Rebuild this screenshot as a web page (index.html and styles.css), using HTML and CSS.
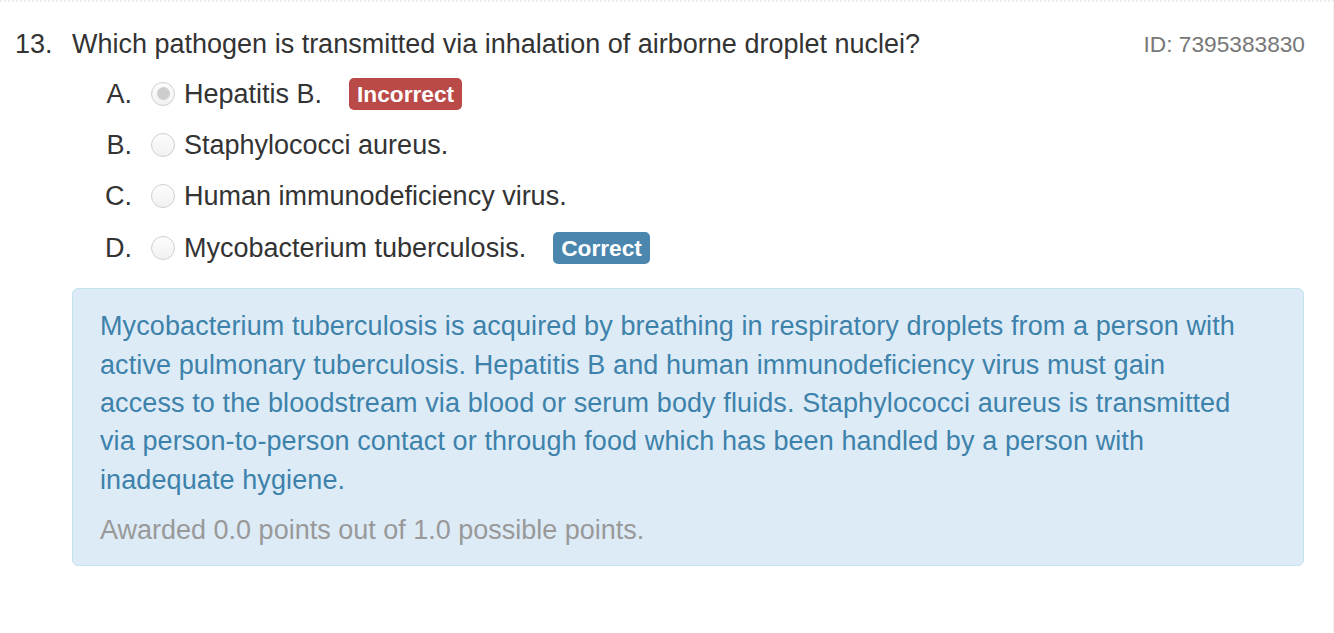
FILE: index.html
```html
<!DOCTYPE html>
<html>
<head>
<meta charset="utf-8">
<link rel="stylesheet" href="styles.css">
</head>
<body>
<div class="page">
  <div class="question">
    <span class="qnum">13.</span>
    <span class="qtext">Which pathogen is transmitted via inhalation of airborne droplet nuclei?</span>
    <span class="qid">ID: 7395383830</span>
  </div>
  <div class="options">
    <div class="option">
      <span class="letter">A.</span>
      <span class="radio checked"></span>
      <span class="otext">Hepatitis B.</span>
      <span class="badge badge-incorrect">Incorrect</span>
    </div>
    <div class="option">
      <span class="letter">B.</span>
      <span class="radio"></span>
      <span class="otext">Staphylococci aureus.</span>
    </div>
    <div class="option">
      <span class="letter">C.</span>
      <span class="radio"></span>
      <span class="otext">Human immunodeficiency virus.</span>
    </div>
    <div class="option">
      <span class="letter">D.</span>
      <span class="radio"></span>
      <span class="otext">Mycobacterium tuberculosis.</span>
      <span class="badge badge-correct">Correct</span>
    </div>
  </div>
  <div class="explain">
    <p class="explain-text">Mycobacterium tuberculosis is acquired by breathing in respiratory droplets from a person with active pulmonary tuberculosis. Hepatitis B and human immunodeficiency virus must gain access to the bloodstream via blood or serum body fluids. Staphylococci aureus is transmitted via person-to-person contact or through food which has been handled by a person with inadequate hygiene.</p>
    <p class="points">Awarded 0.0 points out of 1.0 possible points.</p>
  </div>
</div>
</body>
</html>
```

FILE: styles.css
```css
html, body {
  margin: 0;
  padding: 0;
  background: #fff;
}
body {
  font-family: "Liberation Sans", Arial, sans-serif;
  font-size: 27px;
  line-height: 38px;
  color: #333;
}
.page {
  height: 632px;
  box-sizing: border-box;
  border-top: 2px dotted #ececec;
  border-right: 1px solid #f0f0f0;
  padding-top: 23px;
}
.question {
  display: flex;
  align-items: center;
  padding-left: 15px;
  padding-right: 28px;
}
.qnum {
  width: 57px;
  flex: none;
}
.qtext {
  flex: 1;
}
.qid {
  color: #777;
  font-size: 22.7px;
}
.options {
  margin-top: 5px;
  padding-left: 72px;
}
.option {
  display: flex;
  align-items: center;
  height: 51.33px;
}
.letter {
  width: 60px;
  text-align: right;
  flex: none;
}
.radio {
  width: 22px;
  height: 22px;
  border: 1px solid #cfcfcf;
  border-radius: 50%;
  background: linear-gradient(#fdfdfd, #f1f1f1);
  margin-left: 19px;
  margin-right: 9px;
  box-sizing: content-box;
  display: flex;
  align-items: center;
  justify-content: center;
  flex: none;
}
.radio.checked::after {
  content: "";
  width: 13px;
  height: 13px;
  border-radius: 50%;
  background: #cdcdcd;
}
.badge {
  margin-left: 27px;
  color: #fff;
  font-weight: bold;
  font-size: 22.7px;
  line-height: 32px;
  height: 32px;
  padding: 0 8px;
  border-radius: 5px;
}
.badge-incorrect {
  background: #b94a48;
}
.badge-correct {
  background: #4a86ad;
}
.explain {
  margin: 15px 29px 0 72px;
  background: #ddebf7;
  border: 1px solid #c4e2f0;
  border-radius: 6px;
  padding: 18px 64px 16px 27px;
  color: #3d82aa;
  letter-spacing: 0.1px;
  line-height: 38.3px;
}
.explain p {
  margin: 0;
}
.points {
  margin-top: 12px !important;
  color: #999;
  letter-spacing: 0;
}
```
